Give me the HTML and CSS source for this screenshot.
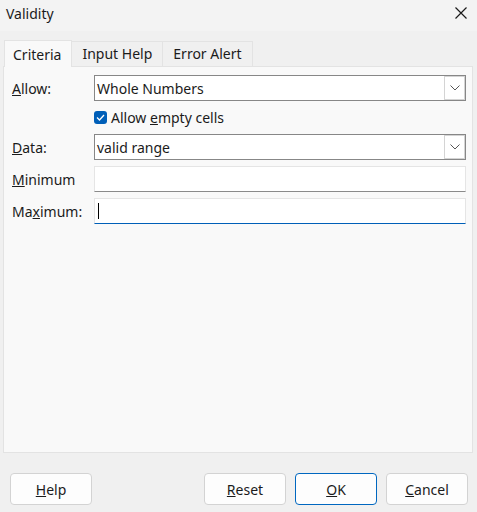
FILE: index.html
```html
<!DOCTYPE html>
<html>
<head>
<meta charset="utf-8">
<link rel="stylesheet" href="styles.css">
</head>
<body>
<div class="window">
  <div class="titlebar">
    <span class="title">Validity</span>
    <svg class="close" width="14" height="14" viewBox="0 0 14 14"><path d="M1.5 1.5 L12.5 12.5 M12.5 1.5 L1.5 12.5" stroke="#1a1a1a" stroke-width="1.2" fill="none"/></svg>
  </div>
  <div class="tabs">
    <div class="tab active">Criteria</div>
    <div class="tab">Input Help</div>
    <div class="tab">Error Alert</div>
  </div>
  <div class="panel">
    <div class="form">
      <label class="lbl"><u>A</u>llow:</label>
      <div class="combo"><span class="val">Whole Numbers</span><span class="drop"><svg width="10" height="6" viewBox="0 0 10 6"><path d="M0.5 0.5 L5 5 L9.5 0.5" stroke="#555" stroke-width="1" fill="none"/></svg></span></div>
      <div></div>
      <div class="check"><span class="box"><svg width="9" height="7" viewBox="0 0 9 7"><path d="M1 3.5 L3.5 6 L8 1" stroke="#fff" stroke-width="1.3" fill="none"/></svg></span><span>Allow <u>e</u>mpty cells</span></div>
      <label class="lbl"><u>D</u>ata:</label>
      <div class="combo"><span class="val">valid range</span><span class="drop"><svg width="10" height="6" viewBox="0 0 10 6"><path d="M0.5 0.5 L5 5 L9.5 0.5" stroke="#555" stroke-width="1" fill="none"/></svg></span></div>
      <label class="lbl"><u>M</u>inimum</label>
      <div class="input"></div>
      <label class="lbl">Ma<u>x</u>imum:</label>
      <div class="input focus"><span class="caret"></span></div>
    </div>
  </div>
  <div class="buttons">
    <button class="btn"><u>H</u>elp</button>
    <div class="spacer"></div>
    <button class="btn"><u>R</u>eset</button>
    <button class="btn default"><u>O</u>K</button>
    <button class="btn"><u>C</u>ancel</button>
  </div>
</div>
</body>
</html>
```
FILE: styles.css
```css
html, body {
  margin: 0;
  padding: 0;
}
body {
  width: 477px;
  height: 512px;
  background: #f0f0f0;
  font-family: "Noto Sans", "Open Sans", sans-serif;
  font-size: 14px;
  color: #1b1b1b;
  overflow: hidden;
}
.window {
  display: flex;
  flex-direction: column;
  height: 512px;
}
.titlebar {
  height: 31px;
  background: #f3f3f3;
  display: flex;
  align-items: center;
  justify-content: space-between;
  padding: 0 9px 0 6px;
}
.title {
  font-size: 14px;
  margin-top: -5px;
}
.close {
  margin-top: -6px;
}
.tabs {
  display: flex;
  align-items: flex-end;
  padding: 9px 0 0 4px;
  height: 26px;
  position: relative;
  z-index: 1;
}
.tab {
  height: 24px;
  line-height: 23px;
  padding: 0 10px;
  border: 1px solid #e3e3e3;
  border-bottom: none;
  border-left: none;
  background: #f0f0f0;
  box-sizing: content-box;
}
.tab.active {
  height: 26px;
  line-height: 27px;
  padding: 0 10px 0 8px;
  background: #f9f9f9;
  border-left: 1px solid #e3e3e3;
  margin-bottom: -1px;
}
.panel {
  box-sizing: border-box;
  margin: 0 4px 0 3px;
  height: 387px;
  background: #f9f9f9;
  border: 1px solid #e3e3e3;
  padding: 8px 6px 0 8px;
}
.form {
  display: grid;
  grid-template-columns: 82px 1fr;
  row-gap: 6px;
  align-items: center;
}
.lbl {
  font-size: 14px;
}
.combo {
  height: 24px;
  border: 1px solid #878787;
  background: #fff;
  display: flex;
  align-items: center;
  justify-content: space-between;
}
.val {
  padding-left: 2px;
}
.drop {
  width: 19px;
  height: 22px;
  border: 1px solid #d4d4d4;
  display: flex;
  align-items: center;
  justify-content: center;
  background: #fff;
}
.check {
  display: flex;
  align-items: center;
  gap: 4px;
  height: 21px;
}
.box {
  width: 13px;
  height: 13px;
  border-radius: 3px;
  background: #005fb8;
  display: flex;
  align-items: center;
  justify-content: center;
}
.input {
  height: 24px;
  border: 1px solid #e5e5e5;
  border-bottom: 1px solid #8a8a8a;
  background: #fff;
  display: flex;
  align-items: center;
}
.input.focus {
  border-bottom: 1px solid #005fb8;
}
.caret {
  width: 1px;
  height: 16px;
  background: #000;
  margin-left: 3px;
}
.buttons {
  display: flex;
  padding: 20px 9px 0 10px;
  gap: 9px;
}
.spacer {
  flex: 1;
}
.btn {
  width: 82px;
  height: 32px;
  border: 1px solid #d3d3d3;
  border-radius: 4px;
  background: #fdfdfd;
  font-family: "Noto Sans", "Open Sans", sans-serif;
  font-size: 14px;
  color: #1b1b1b;
  padding: 0;
}
.btn.default {
  border-color: #0067c0;
}
```
